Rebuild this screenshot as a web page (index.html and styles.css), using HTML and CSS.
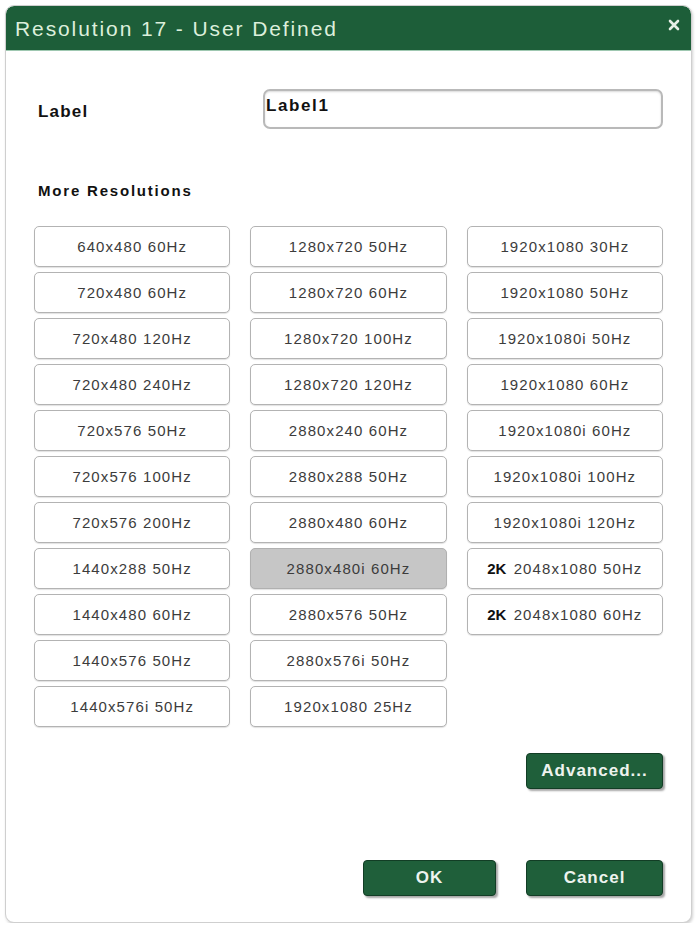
FILE: index.html
```html
<!DOCTYPE html>
<html>
<head>
<meta charset="utf-8">
<link rel="stylesheet" href="styles.css">
</head>
<body>
<div class="dialog">
  <div class="header">
    <span class="title">Resolution 17 - User Defined</span>
    <svg class="close" width="12" height="12" viewBox="0 0 12 12"><path d="M2 2 L10 10 M10 2 L2 10" stroke="#e6efe6" stroke-width="2.6" stroke-linecap="round"/></svg>
  </div>
  <div class="content">
    <div class="label-row">
      <span class="label">Label</span>
      <div class="input">Label1</div>
    </div>
    <div class="section">More Resolutions</div>
    <div class="grid">
      <div class="col">
        <div class="opt">640x480 60Hz</div>
        <div class="opt">720x480 60Hz</div>
        <div class="opt">720x480 120Hz</div>
        <div class="opt">720x480 240Hz</div>
        <div class="opt">720x576 50Hz</div>
        <div class="opt">720x576 100Hz</div>
        <div class="opt">720x576 200Hz</div>
        <div class="opt">1440x288 50Hz</div>
        <div class="opt">1440x480 60Hz</div>
        <div class="opt">1440x576 50Hz</div>
        <div class="opt">1440x576i 50Hz</div>
      </div>
      <div class="col">
        <div class="opt">1280x720 50Hz</div>
        <div class="opt">1280x720 60Hz</div>
        <div class="opt">1280x720 100Hz</div>
        <div class="opt">1280x720 120Hz</div>
        <div class="opt">2880x240 60Hz</div>
        <div class="opt">2880x288 50Hz</div>
        <div class="opt">2880x480 60Hz</div>
        <div class="opt selected">2880x480i 60Hz</div>
        <div class="opt">2880x576 50Hz</div>
        <div class="opt">2880x576i 50Hz</div>
        <div class="opt">1920x1080 25Hz</div>
      </div>
      <div class="col">
        <div class="opt">1920x1080 30Hz</div>
        <div class="opt">1920x1080 50Hz</div>
        <div class="opt">1920x1080i 50Hz</div>
        <div class="opt">1920x1080 60Hz</div>
        <div class="opt">1920x1080i 60Hz</div>
        <div class="opt">1920x1080i 100Hz</div>
        <div class="opt">1920x1080i 120Hz</div>
        <div class="opt"><b class="k">2K</b>&nbsp;2048x1080 50Hz</div>
        <div class="opt"><b class="k">2K</b>&nbsp;2048x1080 60Hz</div>
      </div>
    </div>
    <div class="adv-row">
      <div class="gbtn wide">Advanced...</div>
    </div>
    <div class="foot-row">
      <div class="gbtn ok">OK</div>
      <div class="gbtn wide">Cancel</div>
    </div>
  </div>
</div>
</body>
</html>
```

FILE: styles.css
```css
html, body {
  margin: 0;
  padding: 0;
  background: #ffffff;
}
body {
  font-family: "Liberation Sans", Arial, sans-serif;
}
.dialog {
  margin: 5px 0 0 5px;
  width: 687px;
  height: 918px;
  box-sizing: border-box;
  border: 1px solid #cfcfcf;
  border-radius: 9px;
  box-shadow: 1px 2px 3px rgba(0,0,0,0.18);
  background: #fff;
  overflow: hidden;
}
.header {
  height: 44px;
  background: #1d5e39;
  border-bottom: 1px solid #9fc8b1;
  display: flex;
  align-items: center;
  justify-content: space-between;
  padding: 0 11px 0 9px;
  border-radius: 8px 8px 0 0;
}
.title {
  color: #dcefdc;
  font-size: 21px;
  letter-spacing: 1.9px;
  margin-top: 1px;
}
.close {
  display: block;
  margin-top: -6px;
}
.content {
  padding: 0 28px;
}
.label-row {
  margin-top: 38px;
  display: flex;
  align-items: center;
  height: 40px;
}
.label {
  width: 229px;
  box-sizing: border-box;
  padding-left: 4px;
  font-weight: bold;
  font-size: 17px;
  letter-spacing: 1.2px;
  color: #111;
  margin-top: 6px;
}
.input {
  width: 400px;
  height: 40px;
  box-sizing: border-box;
  border: 2px solid #b9b9b9;
  border-radius: 7px;
  box-shadow: inset 0 1px 2px rgba(0,0,0,0.15);
  font-weight: bold;
  font-size: 17px;
  letter-spacing: 1.6px;
  color: #111;
  padding: 5px 0 0 1px;
}
.section {
  margin-top: 52px;
  height: 20px;
  line-height: 20px;
  padding-left: 4px;
  font-weight: bold;
  font-size: 15px;
  letter-spacing: 1.8px;
  color: #111;
}
.grid {
  margin-top: 25px;
  display: grid;
  grid-template-columns: repeat(3, 1fr);
  column-gap: 20px;
}
.col {
  display: flex;
  flex-direction: column;
  gap: 5px;
}
.opt {
  height: 41px;
  box-sizing: border-box;
  border: 1px solid #b3b3b3;
  border-radius: 5px;
  box-shadow: 0 1px 1px rgba(0,0,0,0.12);
  background: #fff;
  display: flex;
  align-items: center;
  justify-content: center;
  font-size: 15px;
  letter-spacing: 1.1px;
  color: #3c3c3c;
}
.opt.selected {
  background: #c6c6c6;
  border-color: #b0b0b0;
}
.k {
  color: #111;
  font-weight: bold;
  letter-spacing: 0;
  margin-right: 2px;
}
.adv-row {
  margin-top: 26px;
  display: flex;
  justify-content: flex-end;
}
.foot-row {
  margin-top: 71px;
  display: flex;
  justify-content: flex-end;
  gap: 30px;
}
.gbtn {
  height: 36px;
  box-sizing: border-box;
  background: #1f5f3a;
  border: 1px solid #123d25;
  border-radius: 4px;
  box-shadow: 2px 2px 2px rgba(0,0,0,0.35);
  color: #eef3ee;
  font-weight: bold;
  font-size: 17px;
  letter-spacing: 1px;
  display: flex;
  align-items: center;
  justify-content: center;
}
.gbtn.wide {
  width: 137px;
}
.gbtn.ok {
  width: 133px;
}
```
